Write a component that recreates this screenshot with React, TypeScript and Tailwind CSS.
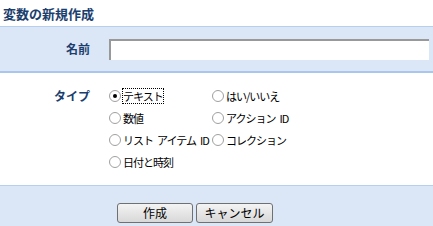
import React, { useState } from 'react';

const font = { fontFamily: '"MS UI Gothic", "Noto Sans CJK JP", sans-serif' };

const options = [
  ['text', 'テキスト'],
  ['bool', 'はい/いいえ'],
  ['number', '数値'],
  ['action', 'アクション ID'],
  ['list', 'リスト アイテム ID'],
  ['collection', 'コレクション'],
  ['date', '日付と時刻'],
];

const Radio: React.FC<{ checked: boolean; label: string; onClick: () => void }> = ({ checked, label, onClick }) => (
  <label className="flex items-center h-[22px] cursor-pointer" onClick={onClick}>
    <span className="w-[12px] h-[12px] rounded-full border border-[#a0a0a0] bg-white flex items-center justify-center shrink-0">
      {checked && <span className="w-[4px] h-[4px] rounded-full bg-black" />}
    </span>
    <span className={`ml-[2px] text-[11px] tracking-[-1px] leading-[14px] text-black whitespace-nowrap ${checked ? 'outline outline-1 outline-dotted outline-black' : ''}`}>
      {label.split(' ').map((part, i) => (
        <React.Fragment key={i}>
          {i > 0 && <span className="inline-block w-[4px]" />}
          {part}
        </React.Fragment>
      ))}
    </span>
  </label>
);

const App: React.FC = () => {
  const [type, setType] = useState('text');
  const [name, setName] = useState('');

  return (
    <div className="w-[433px] h-[226px] bg-white overflow-hidden" style={font}>
      <div className="h-[26px] pl-[3px] pt-[4px] text-[13px] font-bold text-[#1b3e6e]">変数の新規作成</div>

      {/* Name */}
      <div className="h-[47px] bg-[#dbe6f7] border-t border-[#b6cfee] border-b-2 border-b-[#a9c7ee] flex items-center">
        <div className="w-[90px] text-right text-[12px] font-bold text-[#1b3e6e]">名前</div>
        <input
          value={name}
          onChange={e => setName(e.target.value)}
          className="ml-[19px] w-[320px] h-[21px] bg-white border-t-2 border-l-2 border-[#999999] outline-none text-[12px] px-1"
        />
      </div>

      {/* Type */}
      <div className="h-[112px] flex pt-[12px]">
        <div className="w-[90px] text-right text-[12px] font-bold text-[#1b3e6e] leading-[22px]">タイプ</div>
        <div className="ml-[19px] grid grid-cols-[103px_auto] content-start">
          {options.map(([k, l]) => (
            <Radio key={k} checked={type === k} label={l} onClick={() => setType(k)} />
          ))}
        </div>
      </div>

      {/* Actions */}
      <div className="h-[41px] bg-[#dbe6f7] border-t border-[#b6cfee] flex justify-start pl-[117px] pt-[17px] gap-[3px]">
        <button className="w-[76px] h-[20px] rounded-[3px] border border-[#707070] bg-gradient-to-b from-[#f4f4f4] to-[#d8d8d8] text-[12px] text-black">作成</button>
        <button className="w-[77px] h-[20px] rounded-[3px] border border-[#707070] bg-gradient-to-b from-[#f4f4f4] to-[#d8d8d8] text-[12px] text-black">キャンセル</button>
      </div>
    </div>
  );
};

export default App;
